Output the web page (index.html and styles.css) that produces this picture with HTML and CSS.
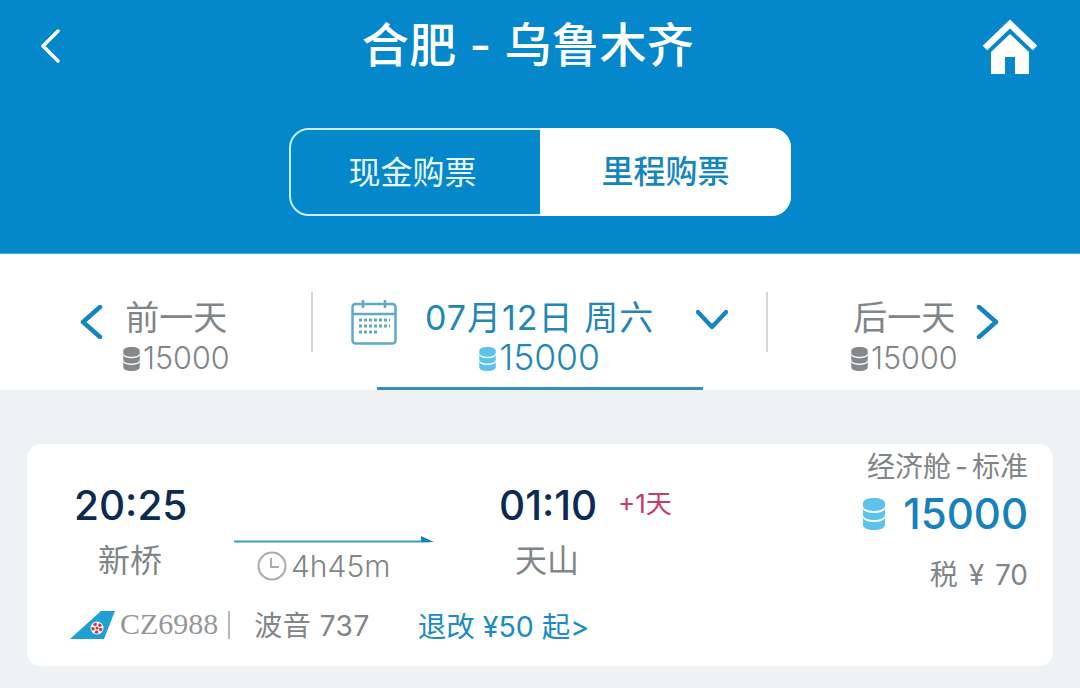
FILE: index.html
```html
<!DOCTYPE html>
<html lang="zh-CN">
<head>
    <meta charset="UTF-8">
    <meta name="viewport" content="width=device-width, initial-scale=1.0">
    <title>合肥 - 乌鲁木齐</title>
    <link rel="stylesheet" href="styles.css">
</head>
<body>

<svg class="defs" width="0" height="0">
    <symbol id="coin" viewBox="0 0 22 32">
        <path d="M0 5C0 2 5 0 11 0s11 2 11 5v3c0 3-5 5-11 5S0 11 0 8z"/>
        <path d="M0 11c2 3 6 4 11 4s9-1 11-4v6c0 3-5 5-11 5S0 20 0 17z"/>
        <path d="M0 20c2 3 6 4 11 4s9-1 11-4v7c0 3-5 5-11 5S0 30 0 27z"/>
    </symbol>
</svg>

<!-- 顶部 -->
<header class="topbar">
    <div class="title-row">
        <svg class="back" viewBox="0 0 20 34"><path d="M18 2L3 17l15 15"/></svg>
        <h1>合肥 - 乌鲁木齐</h1>
        <svg class="home" viewBox="0 0 56 56">
            <path class="roof" d="M3 29L28 5l25 24"/>
            <path class="house" d="M28 15l19 18v22H33V38H23v17H9V33z"/>
        </svg>
    </div>
    <div class="tabs">
        <div class="tab">现金购票</div>
        <div class="tab active">里程购票</div>
    </div>
</header>

<!-- 日期 -->
<nav class="datebar">
    <div class="day day-prev">
        <svg class="arrow" viewBox="0 0 24 34"><path d="M21 2L4 17l17 15"/></svg>
        <div class="day-text">
            <div class="day-name">前一天</div>
            <div class="day-price"><svg class="coin"><use href="#coin"/></svg>15000</div>
        </div>
    </div>
    <div class="day day-current">
        <svg class="calendar" viewBox="0 0 46 46">
            <rect class="cal-frame" x="1.500" y="5" width="43" height="39.500" rx="3"/>
            <path class="cal-frame" d="M1.500 15h43M12 1v8M34 1v8"/>
            <path class="cal-dots" d="M8 21h31M8 27h31M8 33h20"/>
        </svg>
        <div class="day-text">
            <div class="day-name">07月12日 周六</div>
            <div class="day-price"><svg class="coin"><use href="#coin"/></svg>15000</div>
        </div>
        <svg class="caret" viewBox="0 0 34 22"><path d="M2 3l15 16L32 3"/></svg>
    </div>
    <div class="day day-next">
        <div class="day-text">
            <div class="day-name">后一天</div>
            <div class="day-price"><svg class="coin"><use href="#coin"/></svg>15000</div>
        </div>
        <svg class="arrow" viewBox="0 0 24 34"><path d="M3 2l17 15L3 32"/></svg>
    </div>
</nav>

<!-- 航班 -->
<main class="list">
    <section class="flight">
        <div class="flight-main">
            <div class="times">
                <div class="stop stop-dep">
                    <div class="time">20:25</div>
                    <div class="airport">新桥</div>
                </div>
                <div class="route">
                    <svg class="route-line" viewBox="0 0 200 8"><path class="line" d="M0 6.500h196"/><path class="head" d="M187 1l13 6h-13z"/></svg>
                    <div class="duration">
                        <svg class="clock" viewBox="0 0 30 30"><circle cx="15" cy="15" r="13.500"/><path d="M14 7v9h8"/></svg>
                        4h45m
                    </div>
                </div>
                <div class="stop stop-arr">
                    <div class="time">01:10</div>
                    <div class="airport">天山</div>
                </div>
                <div class="plus">+1天</div>
            </div>
            <div class="info">
                <svg class="tail" viewBox="0 0 46 30">
                    <path class="tail-fin" d="M0 29L31 1h14l-11 28z"/>
                    <circle class="tail-mark" cx="27" cy="18" r="6.500"/>
                    <circle class="tail-petals" cx="27" cy="18" r="4"/>
                    <circle class="tail-core" cx="27" cy="18" r="1.500"/>
                </svg>
                <span class="flight-no">CZ6988</span>
                <span class="sep"></span>
                <span class="plane">波音 737</span>
                <span class="change">退改 ¥50 起&gt;</span>
            </div>
        </div>
        <div class="fare">
            <div class="cabin">经济舱<span class="dash">-</span>标准</div>
            <div class="miles"><svg class="coin-big"><use href="#coin"/></svg><span>15000</span></div>
            <div class="tax">税 ¥ 70</div>
        </div>
    </section>
</main>

</body>
</html>
```

FILE: styles.css
```css
* {
    box-sizing: border-box;
}
body {
    margin: 0;
    height: 688px;
    overflow: hidden;
    background-color: #eef2f5;
    font-family: Inter, "Noto Sans CJK SC", sans-serif;
    color: #808587;
}
.defs {
    display: block;
}

/* 顶部 */
.topbar {
    height: 254px;
    padding-top: 20px;
    background-color: #0587cb;
    border-bottom: 1px solid #3fb0cf;
}
.title-row {
    display: flex;
    align-items: flex-start;
    justify-content: space-between;
    height: 108px;
    padding: 0 42px 0 40px;
}
.title-row h1 {
    margin: 0 0 0 14px;
    color: #fff;
    font-size: 47px;
    line-height: 50px;
    font-weight: 500;
    letter-spacing: 0.4px;
}
.back {
    width: 20px;
    height: 34px;
    margin-top: 9px;
    fill: none;
    stroke: #fff;
    stroke-width: 3.500;
    stroke-linecap: round;
    stroke-linejoin: round;
}
.home {
    width: 56px;
    height: 56px;
    margin-top: -1px;
}
.roof {
    fill: none;
    stroke: #fff;
    stroke-width: 6.500;
}
.house {
    fill: #fff;
}
.tabs {
    display: flex;
    width: 502px;
    height: 88px;
    margin: 0 auto;
    border: 2px solid #c8eefa;
    border-radius: 20px;
}
.tab {
    flex: 1;
    padding-right: 6px;
    color: #e6f7fd;
    font-size: 32px;
    line-height: 86px;
    text-align: center;
}
.tab.active {
    flex: none;
    width: 251px;
    margin: -2px -2px -2px 0;
    padding-right: 0;
    background-color: #fff;
    border-radius: 0 20px 20px 0;
    color: #1585bd;
    font-weight: 500;
    line-height: 88px;
}

/* 日期 */
.datebar {
    display: flex;
    height: 136px;
    background-color: #fff;
}
.day {
    position: relative;
    display: flex;
    align-items: flex-start;
    padding-top: 43px;
}
.day-prev {
    width: 313px;
    padding-left: 79px;
    gap: 20px;
}
.day-current {
    width: 455px;
    padding-left: 38px;
    gap: 28px;
}
.day-next {
    flex: 1;
    padding-left: 83px;
    gap: 18px;
}
.day-prev::after,
.day-current::after {
    content: "";
    position: absolute;
    top: 38px;
    right: 0;
    width: 2px;
    height: 60px;
    background-color: #d3d5d6;
}
.day-text {
    text-align: center;
}
.day-name {
    font-size: 34px;
    line-height: 42px;
}
.day-price {
    display: flex;
    align-items: center;
    justify-content: center;
    margin-top: 1px;
    font-size: 30.500px;
    font-weight: 300;
    line-height: 36px;
}
.coin {
    width: 17px;
    height: 24px;
    margin: 2px 3px 0 0;
    fill: #84888a;
}
.arrow {
    width: 24px;
    height: 34px;
    margin-top: 8px;
    fill: none;
    stroke: #1585bd;
    stroke-width: 4.500;
    stroke-linecap: round;
    stroke-linejoin: round;
}
.day-current .day-name {
    color: #2286b6;
    letter-spacing: 1px;
}
.day-current .day-price {
    color: #2286b6;
    font-size: 35.500px;
}
.day-current .coin {
    fill: #5cc3ea;
}
.day-current::before {
    content: "";
    position: absolute;
    left: 64px;
    bottom: 0;
    width: 326px;
    height: 3px;
    background-color: #2f8fbd;
}
.calendar {
    width: 46px;
    height: 46px;
    flex: none;
    margin-top: 2px;
}
.cal-frame {
    fill: none;
    stroke: #5fa8c9;
    stroke-width: 2.500;
}
.cal-dots {
    fill: none;
    stroke: #5fa8c9;
    stroke-width: 3;
    stroke-dasharray: 3 2;
}
.caret {
    width: 32px;
    height: 21px;
    margin: 12px 0 0 14px;
    fill: none;
    stroke: #1585bd;
    stroke-width: 4.500;
    stroke-linecap: round;
    stroke-linejoin: round;
}

/* 航班 */
.list {
    padding: 54px 27px 0;
}
.flight {
    display: flex;
    justify-content: space-between;
    height: 222px;
    padding: 0 25px 0 47px;
    background-color: #fff;
    border-radius: 14px;
}
.flight-main {
    padding-top: 36px;
}
.times {
    display: flex;
    align-items: flex-start;
    height: 124px;
}
.stop {
    flex: none;
    text-align: center;
}
.stop-dep {
    width: 112px;
}
.stop-arr {
    width: 96px;
    margin-left: 65px;
}
.time {
    color: #0c2a52;
    font-size: 40.500px;
    line-height: 52px;
    font-weight: 500;
}
.airport {
    margin-top: 7px;
    font-size: 32px;
    line-height: 44px;
}
.route {
    flex: none;
    width: 200px;
    margin: 55px 0 0 48px;
}
.route-line {
    display: block;
    width: 200px;
    height: 8px;
}
.line {
    stroke: #3a9fbf;
    stroke-width: 2;
}
.head {
    fill: #1582bd;
}
.duration {
    display: flex;
    align-items: center;
    gap: 4px;
    margin: 5px 0 0 23px;
    font-size: 30px;
    font-weight: 300;
    line-height: 36px;
    white-space: nowrap;
}
.clock {
    width: 30px;
    height: 30px;
    fill: none;
    stroke: #a8acae;
    stroke-width: 2;
}
.plus {
    margin: 8px 0 0 23px;
    color: #c73b6b;
    font-size: 26px;
    line-height: 32px;
    white-space: nowrap;
}
.info {
    display: flex;
    align-items: center;
    height: 40px;
    margin-left: -4px;
    font-size: 28px;
    white-space: nowrap;
}
.tail {
    width: 46px;
    height: 30px;
    margin-top: 1px;
}
.tail-fin {
    fill: #1fa0d2;
}
.tail-mark {
    fill: #fff;
}
.tail-petals {
    fill: none;
    stroke: #c23a3f;
    stroke-width: 3;
    stroke-dasharray: 3 2;
}
.tail-core {
    fill: #c23a3f;
}
.flight-no {
    margin-left: 4px;
    font-family: "Liberation Serif", serif;
    color: #93979a;
    font-size: 30px;
}
.sep {
    width: 2px;
    height: 28px;
    margin: 2px 0 0 10px;
    background-color: #b5b8ba;
}
.plane {
    margin-left: 24px;
    letter-spacing: 0.5px;
}
.change {
    margin-left: 48px;
    color: #1a8cc0;
    font-size: 28.500px;
}
.fare {
    display: flex;
    flex-direction: column;
    align-items: flex-end;
}
.cabin {
    margin-top: 4px;
    font-size: 28px;
    line-height: 38px;
}
.dash {
    padding: 0 4px;
}
.miles {
    display: flex;
    align-items: center;
    gap: 18px;
    margin-top: 1px;
    color: #1582bb;
    font-size: 42px;
    line-height: 54px;
    font-weight: 500;
}
.coin-big {
    width: 22px;
    height: 32px;
    fill: #5cc3ea;
}
.tax {
    margin-top: 14px;
    font-size: 28px;
    line-height: 40px;
    word-spacing: 3px;
}
```
